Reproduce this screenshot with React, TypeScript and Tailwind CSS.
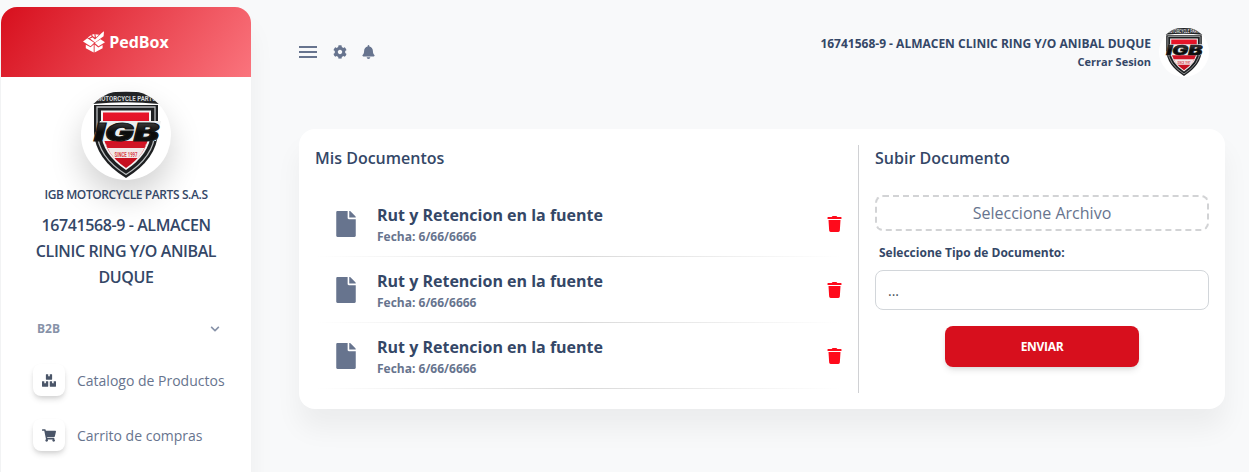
import React from "react";
import { FaBell, FaBoxes, FaChevronDown, FaCog, FaFile, FaShoppingCart, FaTrash } from "react-icons/fa";

function ShieldLogo({ className }: { className: string }) {
  return (
    <svg viewBox="0 0 90 90" className={className} aria-label="IGB Motorcycle Parts">
      <defs>
        <linearGradient id="shieldRed" x1="0" y1="0" x2="0" y2="1">
          <stop offset="0" stopColor="#e8152a" />
          <stop offset="1" stopColor="#c20f1f" />
        </linearGradient>
        <linearGradient id="letterShade" x1="0" y1="0" x2="0" y2="1">
          <stop offset="0" stopColor="#555" />
          <stop offset="0.5" stopColor="#0b0b0b" />
          <stop offset="1" stopColor="#111" />
        </linearGradient>
      </defs>
      <path d="M13 15 H77 V42 Q76 69 45 88 Q14 69 13 42Z" fill="#1d1f21" />
      <path d="M16 17 H74 V42 Q73 67 45 84.5 Q17 67 16 42Z" fill="none" stroke="#b9bcbe" strokeWidth="1.3" />
      <path d="M20 20.5 H70 V42 Q69 64 45 80 Q21 64 20 42Z" fill="#f4f4f4" />
      <path d="M22 22.5 H68 V42 Q67 63 45 78 Q23 63 22 42Z" fill="url(#shieldRed)" />
      <path d="M24.5 54 H65.5 Q62 62 57 68 H33 Q28 62 24.5 54Z" fill="#f2e9e9" />
      <path d="M25 54 H65 L63.5 58 H26.5Z" fill="#cf1526" />
      <path d="M12 14 V8 Q15 3.5 24 3 Q45 .5 66 3 Q75 3.5 78 8 V14 Q45 10.5 12 14Z" fill="#222426" />
      <text x="15" y="11.2" textLength="60" lengthAdjust="spacingAndGlyphs" fontFamily="Roboto, sans-serif" fontWeight="700" fontSize="8" fill="#d5d8da">MOTORCYCLE PARTS</text>
      <path d="M19 31 H80 L75 51 H12 L14 44Z" fill="#edeeee" />
      <text x="13" y="50.5" textLength="65" lengthAdjust="spacingAndGlyphs" fontFamily="Inter, 'Open Sans', sans-serif" fontWeight="900" fontStyle="italic" fontSize="24" fill="url(#letterShade)" stroke="#181818" strokeWidth="1">IGB</text>
      <text x="33.5" y="67.4" textLength="23" lengthAdjust="spacingAndGlyphs" fontFamily="Roboto, sans-serif" fontWeight="700" fontSize="7" fill="#d8404a">SINCE 1997</text>
    </svg>
  );
}

function BoxLogo() {
  return (
    <svg viewBox="0 0 22 22" className="h-[22px] w-[22px]" fill="#fff">
      <path d="M0 10.5 4.3 7.2 11.2 11.7 7.5 15.2Z" />
      <path d="M11.8 12 17.5 8.2 22 11.2 15.5 15.2Z" />
      <path d="M2.8 13.8 7.6 16.3 10.7 13.5V21.5L2.8 17.3Z" />
      <path d="M11.6 13.5 15.3 16.4 19.6 14V17.3L11.6 21.5Z" />
      <path d="M7 7.6 9.6 6.4 12 8.5 19 1.8 21 .2 20.6 5.2 12 11.4Z" />
      <path d="M4.7 6.4 8 4.3 8.8 5.3 6 7Z" />
      <path d="M8.8 3.8 11.3 3 11.8 6.5 10.2 5.2Z" />
      <path d="M12.4 3.2 16 3.7 13 6.4Z" />
    </svg>
  );
}

function NavItem({ icon, label }: { icon: React.ReactNode; label: string }) {
  return (
    <div className="flex h-8 items-center">
      <div className="flex h-8 w-8 items-center justify-center rounded-lg bg-white text-[#4a5568] shadow-[0_4px_6px_-1px_rgba(0,0,0,0.14),0_2px_4px_-1px_rgba(0,0,0,0.08)]">
        {icon}
      </div>
      <span className="ml-3 text-[14px] font-medium text-[#67748e]">{label}</span>
    </div>
  );
}

function DocumentRow() {
  return (
    <div className="h-[66px]">
      <div className="flex h-[65px] items-center">
        <FaFile className="ml-[21px] h-[26px] w-5 text-[#67748e]" />
        <div className="ml-[21px] flex-1">
          <div className="text-[16px] leading-[26px] font-bold text-[#344767]">Rut y Retencion en la fuente</div>
          <div className="text-[12px] leading-[18px] font-bold text-[#67748e]">Fecha: 6/66/6666</div>
        </div>
        <FaTrash className="h-4 w-[15px] text-[#ff0a1b]" />
      </div>
      <div className="h-px bg-linear-to-r from-transparent via-black/15 to-transparent" />
    </div>
  );
}

export default function App() {
  return (
    <div className="flex h-[472px] w-[1249px] overflow-hidden bg-[#f8f9fa] pl-px font-['Open_Sans',sans-serif] text-[#344767]">
      <aside className="mt-[7px] h-[520px] w-[250px] shrink-0 rounded-t-2xl bg-white shadow-[0_20px_27px_0_rgba(0,0,0,0.05)]">
        <div className="flex h-[70px] items-center justify-center gap-1 rounded-t-2xl bg-[linear-gradient(125deg,#d70f1d_0%,#fa747d_100%)]">
          <BoxLogo />
          <span className="text-[16px] font-bold text-white">PedBox</span>
        </div>
        <div className="mx-auto mt-[13px] h-[90px] w-[90px] overflow-hidden rounded-full bg-white shadow-[0_16px_32px_0_rgba(0,0,0,0.18)]">
          <ShieldLogo className="h-[90px] w-[90px]" />
        </div>
        <div className="mt-[5px] text-center text-[12px] leading-5 font-semibold tracking-[-0.4px]">IGB MOTORCYCLE PARTS S.A.S</div>
        <div className="mx-auto mt-[7px] w-[200px] text-center text-[16px] leading-[26px] font-semibold tracking-[-0.4px]">
          16741568-9 - ALMACEN CLINIC RING Y/O ANIBAL DUQUE
        </div>
        <div className="mt-[29px] flex h-5 items-center justify-between pr-[31px] pl-9 text-[12px] font-bold text-[#8792a8]">
          <span>B2B</span>
          <FaChevronDown className="h-[10px] w-[10px]" />
        </div>
        <div className="mt-[25px] flex flex-col gap-[23px] pl-8">
          <NavItem icon={<FaBoxes className="h-[13px] w-[14px]" />} label="Catalogo de Productos" />
          <NavItem icon={<FaShoppingCart className="h-[13px] w-[14px]" />} label="Carrito de compras" />
        </div>
      </aside>

      <main className="ml-12 w-[926px] shrink-0">
        <header className="flex h-[129px] items-start justify-between">
          <div className="mt-[45px] flex items-center text-[#67748e]">
            <div className="flex w-[18px] flex-col gap-[3px]">
              <i className="h-[2px] bg-[#67748e]" />
              <i className="h-[2px] bg-[#67748e]" />
              <i className="h-[2px] bg-[#67748e]" />
            </div>
            <FaCog className="ml-4 h-[14px] w-[14px]" />
            <FaBell className="ml-[15px] h-[14px] w-[13px]" />
          </div>
          <div className="mr-4 flex items-start gap-2">
            <div className="mt-[34px] text-right font-bold">
              <div className="text-[12px] leading-5">16741568-9 - ALMACEN CLINIC RING Y/O ANIBAL DUQUE</div>
              <div className="text-[11px] leading-4">Cerrar Sesion</div>
            </div>
            <div className="mt-[27px] h-[50px] w-[50px] overflow-hidden rounded-full bg-white">
              <ShieldLogo className="h-[50px] w-[50px]" />
            </div>
          </div>
        </header>

        <section className="flex h-[280px] rounded-2xl bg-white p-4 shadow-[0_20px_27px_0_rgba(0,0,0,0.05)]">
          <div className="w-[527px]">
            <h2 className="h-[46px] text-[16px] leading-[26px] font-semibold">Mis Documentos</h2>
            <DocumentRow />
            <DocumentRow />
            <DocumentRow />
          </div>
          <div className="ml-4 w-px bg-[#d0d1d4]" />
          <div className="ml-4 w-[334px]">
            <h2 className="h-[50px] text-[16px] leading-[26px] font-semibold">Subir Documento</h2>
            <div className="flex h-9 items-center justify-center rounded-lg border-2 border-dashed border-[#d2d3d5] text-[16px] text-[#67748e]">
              Seleccione Archivo
            </div>
            <div className="mt-3 ml-1 text-[12px] leading-5 font-bold">Seleccione Tipo de Documento:</div>
            <div className="mt-[7px] flex h-10 items-center rounded-lg border border-[#d2d6da] px-3 text-[14px] text-[#495057]">...</div>
            <button className="mx-auto mt-4 block h-[41px] w-[194px] rounded-lg bg-[#d70f1d] text-[12px] font-bold tracking-[-0.3px] text-white shadow-[0_4px_7px_-1px_rgba(0,0,0,0.11),0_2px_4px_-1px_rgba(0,0,0,0.07)]">
              ENVIAR
            </button>
          </div>
        </section>
      </main>
    </div>
  );
}
